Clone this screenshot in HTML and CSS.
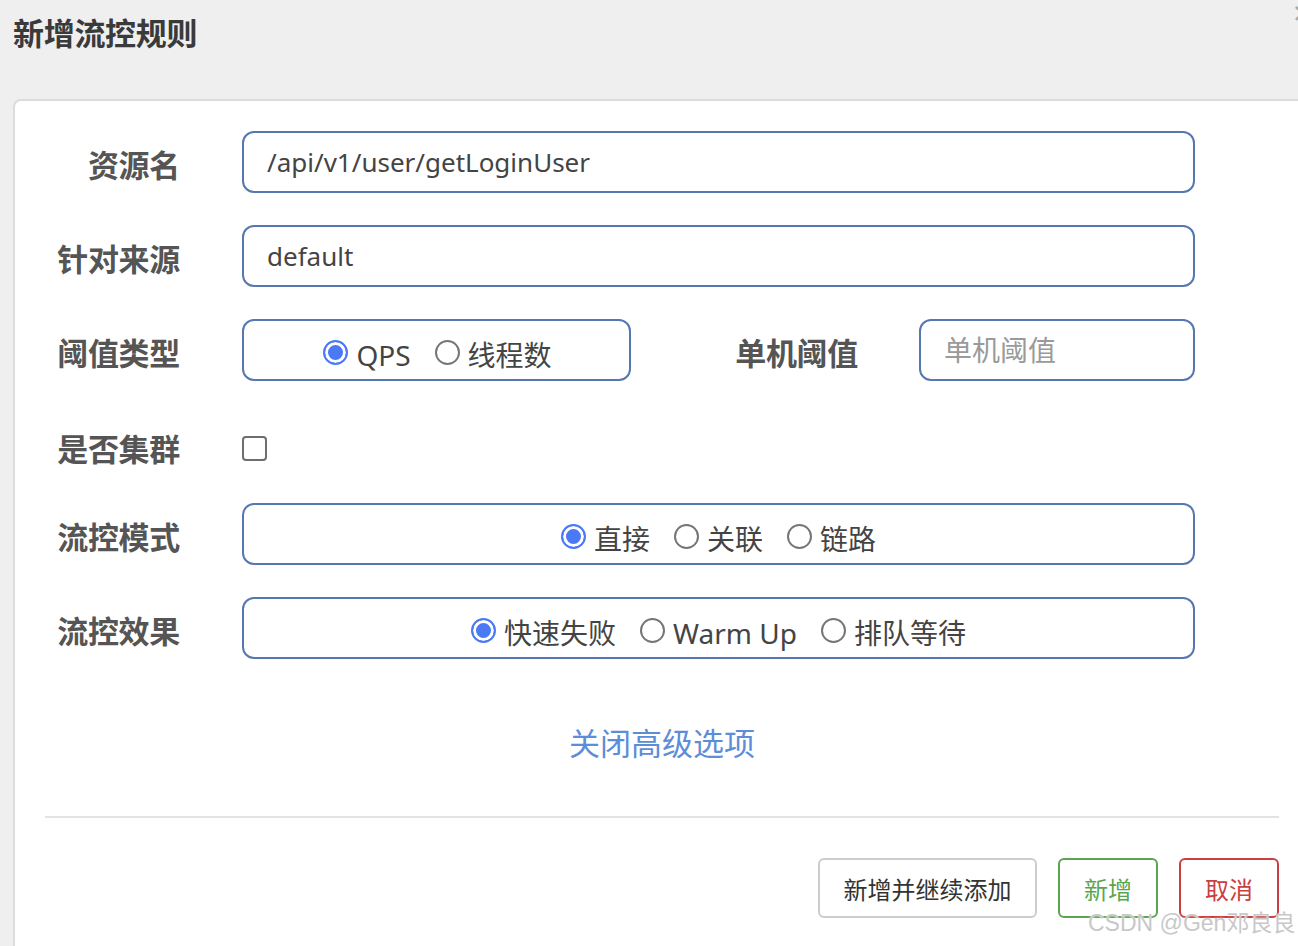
FILE: index.html
```html
<!DOCTYPE html>
<html lang="zh-CN">
<head>
<meta charset="utf-8">
<title>新增流控规则</title>
<link rel="stylesheet" href="styles.css">
</head>
<body>
<div class="page">
  <span class="close">×</span>
  <h1 class="title">新增流控规则</h1>
  <div class="card">
    <div class="form">
      <div class="row">
        <label class="label">资源名</label>
        <div class="field input">/api/v1/user/getLoginUser</div>
      </div>
      <div class="row">
        <label class="label">针对来源</label>
        <div class="field input">default</div>
      </div>
      <div class="row">
        <label class="label">阈值类型</label>
        <div class="split">
          <div class="field radios narrow">
            <span class="opt"><span class="radio on"></span>QPS</span>
            <span class="opt"><span class="radio"></span>线程数</span>
          </div>
          <label class="label2">单机阈值</label>
          <div class="field input placeholder">单机阈值</div>
        </div>
      </div>
      <div class="row row-check">
        <label class="label">是否集群</label>
        <div class="check-wrap"><span class="checkbox"></span></div>
      </div>
      <div class="row">
        <label class="label">流控模式</label>
        <div class="field radios">
          <span class="opt"><span class="radio on"></span>直接</span>
          <span class="opt"><span class="radio"></span>关联</span>
          <span class="opt"><span class="radio"></span>链路</span>
        </div>
      </div>
      <div class="row">
        <label class="label">流控效果</label>
        <div class="field radios">
          <span class="opt"><span class="radio on"></span>快速失败</span>
          <span class="opt"><span class="radio"></span>Warm Up</span>
          <span class="opt"><span class="radio"></span>排队等待</span>
        </div>
      </div>
      <div class="advanced"><a class="link">关闭高级选项</a></div>
      <div class="divider"></div>
      <div class="actions">
        <button class="btn">新增并继续添加</button>
        <button class="btn green">新增</button>
        <button class="btn red">取消</button>
      </div>
    </div>
  </div>
  <span class="watermark">CSDN @Gen邓良良</span>
</div>
</body>
</html>
```
FILE: styles.css
```css
* { box-sizing: border-box; }
html, body {
  margin: 0;
  padding: 0;
  background: #efefef;
  overflow: hidden;
  width: 1298px;
  height: 946px;
}
body {
  font-family: "Noto Sans", "Noto Sans CJK SC", sans-serif;
  color: #444;
}
.page {
  position: relative;
  width: 1298px;
  height: 946px;
  padding-left: 13px;
}
.close {
  position: absolute;
  left: 1293px;
  top: -3px;
  font-size: 32px;
  line-height: 32px;
  color: #aaa;
}
.title {
  margin: 0;
  padding-top: 13px;
  height: 99px;
  font-size: 31px;
  line-height: 38px;
  font-weight: 700;
  color: #3a3a3a;
  font-family: "Noto Sans CJK SC", sans-serif;
  letter-spacing: -0.3px;
}
.card {
  background: #fff;
  border-top: 2px solid #dcdcdc;
  border-left: 2px solid #dcdcdc;
  border-top-left-radius: 8px;
  height: 900px;
  margin-right: -20px;
  padding: 30px 0 0 30px;
}
.form {
  width: 1234px;
  display: flex;
  flex-direction: column;
}
.row {
  display: flex;
  align-items: center;
  height: 62px;
  margin-bottom: 32px;
}
.row-check {
  height: 58px;
}
.label, .label2 {
  font-family: "Noto Sans CJK SC", sans-serif;
  font-size: 31px;
  font-weight: 700;
  color: #555;
  text-align: right;
  line-height: 40px;
  padding-top: 4px;
  letter-spacing: -0.3px;
}
.row-check .label {
  padding-top: 11px;
}
.label {
  width: 135px;
  flex: none;
  margin-right: 62px;
}
.label2 {
  width: 227px;
  flex: none;
  margin-right: 61px;
}
.field {
  height: 62px;
  border: 2px solid #5677b1;
  border-radius: 12px;
  background: #fff;
}
.input {
  width: 953px;
  display: flex;
  align-items: center;
  padding-left: 23px;
  font-size: 26px;
  color: #444;
}
.split {
  display: flex;
  align-items: center;
  width: 953px;
}
.split .input {
  flex: 1;
  width: auto;
}
.placeholder {
  color: #9a9a9a;
  font-family: "Noto Sans CJK SC", sans-serif;
  font-size: 28px;
  padding-bottom: 2px;
}
.radios {
  width: 953px;
  display: flex;
  align-items: center;
  justify-content: center;
  gap: 24px;
  padding-top: 10px;
  font-size: 28px;
  color: #444;
}
.radios.narrow {
  width: 389px;
  flex: none;
  padding-left: 2px;
}
.opt {
  display: inline-flex;
  align-items: center;
  line-height: 36px;
}
.radio {
  width: 25px;
  height: 25px;
  border-radius: 50%;
  border: 2px solid #767676;
  margin-right: 8px;
  margin-top: -6px;
  background: #fff;
  flex: none;
}
.radio.on {
  border-color: #4b79f5;
  background: #4b79f5;
  box-shadow: inset 0 0 0 3px #fff;
}
.check-wrap {
  display: flex;
  align-items: center;
  padding-top: 12px;
}
.checkbox {
  width: 25px;
  height: 25px;
  border: 2px solid #6e6e6e;
  border-radius: 4px;
  background: #fff;
}
.advanced {
  text-align: center;
  margin-top: 29px;
  height: 96px;
}
.link {
  font-family: "Noto Sans CJK SC", sans-serif;
  font-size: 31px;
  color: #5b8dd9;
  line-height: 44px;
}
.divider {
  height: 2px;
  background: #e3e3e3;
}
.actions {
  display: flex;
  justify-content: flex-end;
  gap: 21px;
  padding-top: 40px;
}
.btn {
  height: 60px;
  font-family: "Noto Sans CJK SC", sans-serif;
  font-size: 24px;
  color: #333;
  background: #fff;
  border: 2px solid #cccccc;
  border-radius: 6px;
  padding: 0 22px;
  width: 219px;
}
.btn.green {
  width: 100px;
  padding: 0;
  color: #5aa64f;
  border-color: #5aa64f;
}
.btn.red {
  width: 100px;
  padding: 0;
  color: #c9413f;
  border-color: #c9413f;
}
.watermark {
  position: absolute;
  left: 1088px;
  top: 908px;
  font-size: 23px;
  line-height: 30px;
  color: #c8c8c8;
  font-family: "Liberation Sans", "Noto Sans CJK SC", sans-serif;
  text-shadow: 0 0 2px #fff;
  white-space: nowrap;
}
```
